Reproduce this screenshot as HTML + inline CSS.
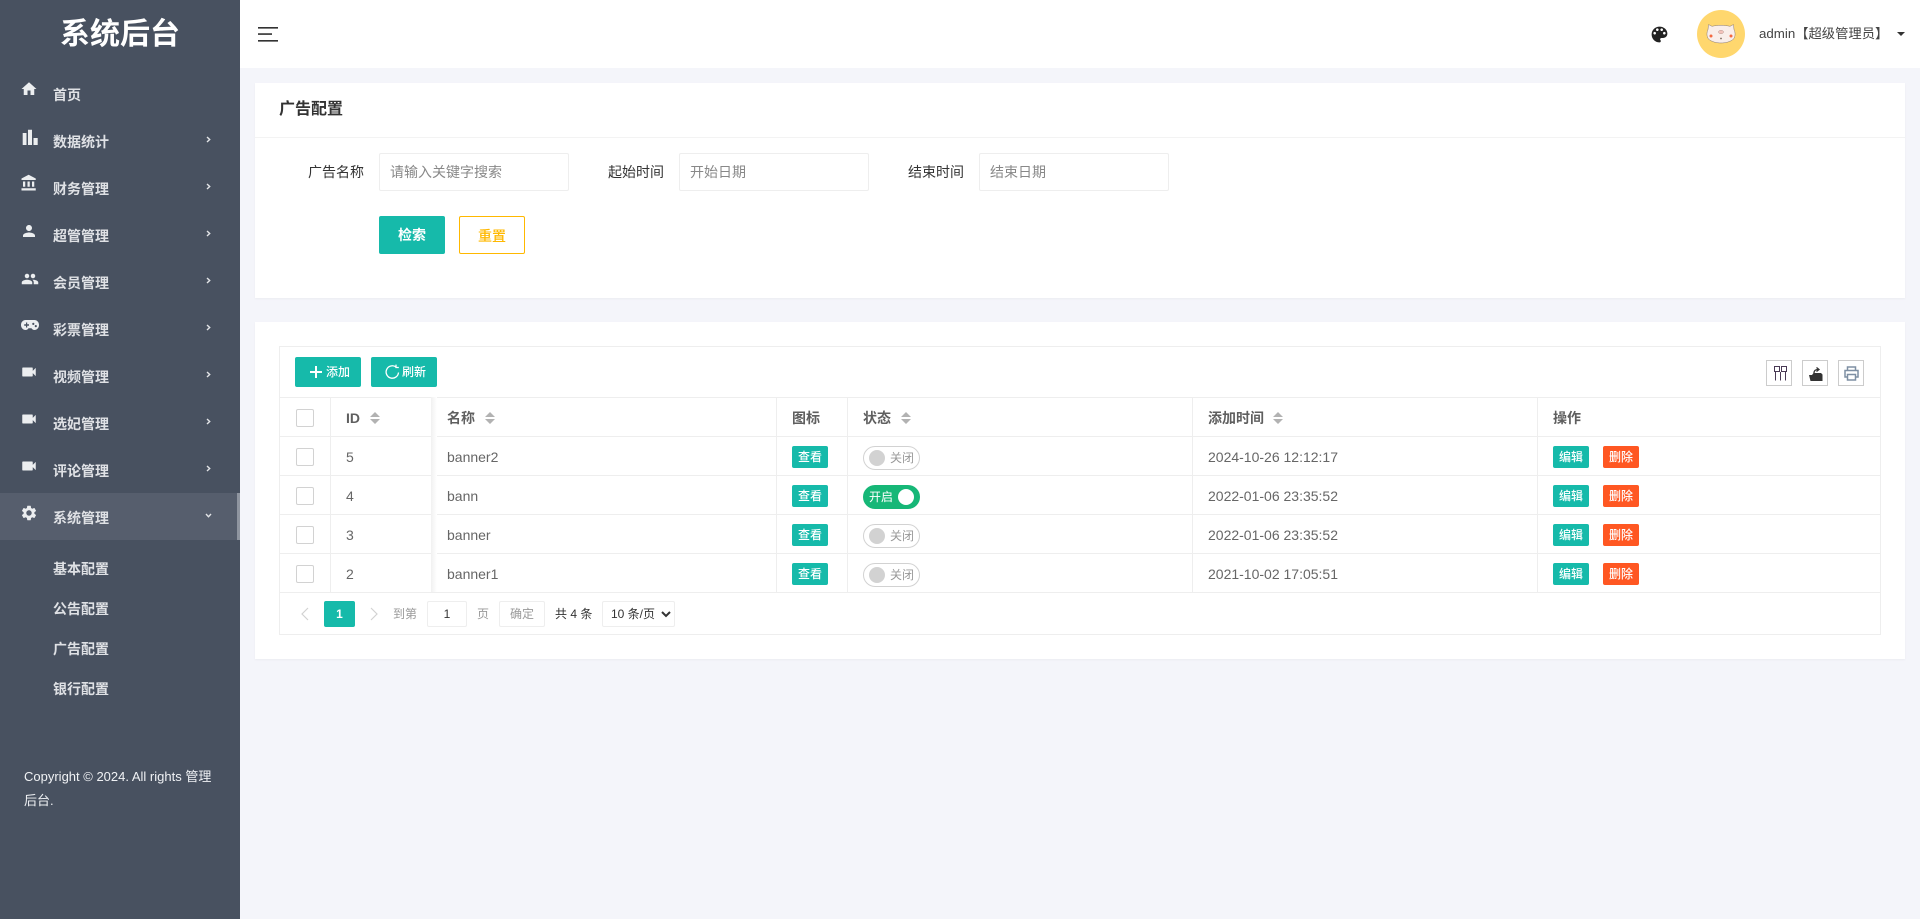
<!DOCTYPE html>
<html lang="zh-CN">
<head>
<meta charset="utf-8">
<title>广告配置</title>
<style>
*{box-sizing:border-box;margin:0;padding:0}
html,body{width:1920px;height:919px;overflow:hidden;background:#f4f5fa;font-family:"Liberation Sans","Noto Sans CJK SC",sans-serif;font-size:14px;color:#333}
.a{position:absolute}
.t{position:absolute;white-space:nowrap;height:20px;line-height:20px}
#side{position:absolute;left:0;top:0;width:240px;height:919px;background:#485160}
.m{font-weight:700;color:#dfe1e5;left:53px}
.ic{position:absolute;left:20px;width:18px;height:18px;fill:#eceef0}
.chev{position:absolute;left:206px;width:5px;height:7px;fill:none;stroke:#e2e4e7;stroke-width:1.4}
#head{position:absolute;left:240px;top:0;width:1680px;height:68px;background:#fff}
.card{position:absolute;left:255px;width:1650px;background:#fff;box-shadow:0 1px 2px rgba(0,0,0,.04)}
.ipt{position:absolute;top:153px;width:190px;height:38px;border:1px solid #eee;border-radius:2px;background:#fff;color:#888;line-height:36px;padding-left:11px}
.ipt.s{padding-left:10px}
.btn{position:absolute;border-radius:2px;text-align:center;font-weight:700}
.tb{position:absolute;left:279px;top:346px;width:1602px;height:289px;border:1px solid #eee;background:#fff}
.h{position:absolute;left:279px;width:1602px;height:1px;background:#eee}
.v{position:absolute;top:397px;width:1px;height:195px;background:#eee}
.th{font-weight:bold;color:#5f5f5f}
.td{color:#666}
.cb{position:absolute;left:296px;width:18px;height:18px;border:1px solid #d2d2d2;border-radius:2px;background:#fff}
.tag{position:absolute;width:36px;height:22px;line-height:22px;border-radius:2px;color:#fff;font-size:12px;font-weight:500;text-align:center;background:#16baaa}
.red{background:#ff5722}
.sw{position:absolute;left:863px;width:57px;height:24px;border-radius:12px;border:1px solid #d2d2d2;background:#fff;font-size:12px;color:#999;line-height:22px}
.sw i{position:absolute;left:5px;top:3px;width:16px;height:16px;border-radius:50%;background:#d2d2d2}
.sw span{position:absolute;left:26px;top:0}
.on{background:#16b777;border-color:#16b777;color:#fff}
.on i{left:34px;background:#fff}
.on span{left:5px}
.sort{position:absolute;width:10px;height:12px}
.tool{position:absolute;top:360px;width:26px;height:26px;border:1px solid #ccc;background:#fff}
</style>
</head>
<body>
<div id="side">
  <div class="t" style="left:0;width:240px;top:15px;height:40px;line-height:40px;text-align:center;font-size:30px;font-weight:700;color:#fff">系统后台</div>

  <svg class="ic" style="top:80px" viewBox="0 0 24 24"><path d="M10 20v-6h4v6h5v-8h3L12 3 2 12h3v8z"/></svg>
  <div class="t m" style="top:85px">首页</div>

  <svg class="ic" style="top:127px" viewBox="0 0 18 18"><path d="M2.700 6H6.500V18H2.700zM8 2.700H12V18H8zM13.500 11H17.700V18H13.500z"/></svg>
  <div class="t m" style="top:132px">数据统计</div>
  <svg class="chev" style="top:136px" viewBox="0 0 5 7"><path d="M1 1 3.700 3.500 1 6"/></svg>

  <svg class="ic" style="top:174px" viewBox="0 0 24 24"><path d="M4 10v7h3v-7H4zm6 0v7h3v-7h-3zM2 22h19v-3H2v3zm14-12v7h3v-7h-3zm-4.500-9L2 6v2h19V6l-9.500-5z"/></svg>
  <div class="t m" style="top:179px">财务管理</div>
  <svg class="chev" style="top:183px" viewBox="0 0 5 7"><path d="M1 1 3.700 3.500 1 6"/></svg>

  <svg class="ic" style="top:222px" viewBox="0 0 24 24"><path d="M12 12c2.210 0 4-1.790 4-4s-1.790-4-4-4-4 1.790-4 4 1.790 4 4 4zm0 2c-2.670 0-8 1.340-8 4v2h16v-2c0-2.660-5.330-4-8-4z"/></svg>
  <div class="t m" style="top:226px">超管管理</div>
  <svg class="chev" style="top:230px" viewBox="0 0 5 7"><path d="M1 1 3.700 3.500 1 6"/></svg>

  <svg class="ic" style="top:270px;left:21px" viewBox="0 0 24 24"><path d="M16 11c1.660 0 2.990-1.340 2.990-3S17.660 5 16 5c-1.660 0-3 1.340-3 3s1.340 3 3 3zm-8 0c1.660 0 2.990-1.340 2.990-3S9.660 5 8 5C6.340 5 5 6.340 5 8s1.340 3 3 3zm0 2c-2.330 0-7 1.170-7 3.500V19h14v-2.500c0-2.330-4.670-3.500-7-3.500zm8 0c-.290 0-.620.020-.970.050 1.160.840 1.970 1.970 1.970 3.450V19h6v-2.500c0-2.330-4.670-3.500-7-3.500z"/></svg>
  <div class="t m" style="top:273px">会员管理</div>
  <svg class="chev" style="top:277px" viewBox="0 0 5 7"><path d="M1 1 3.700 3.500 1 6"/></svg>

  <svg class="ic" style="top:316px;left:21px" viewBox="0 0 18 18"><path fill-rule="evenodd" d="M4.500 4H13.500C16 4 18 6.200 18 9S16 14 13.500 14C12 14 11 13 10.500 12.200H7.500C7 13 6 14 4.500 14 2 14 0 11.800 0 9S2 4 4.500 4ZM5 6.500V8.300H3.200V9.700H5V11.500H6.200V9.700H8V8.300H6.200V6.500ZM12.300 6.800A1.100 1.100 0 1 0 12.301 9A1.100 1.100 0 0 0 12.300 6.800ZM14.800 9A1.100 1.100 0 1 0 14.801 11.200A1.100 1.100 0 0 0 14.800 9Z"/></svg>
  <div class="t m" style="top:320px">彩票管理</div>
  <svg class="chev" style="top:324px" viewBox="0 0 5 7"><path d="M1 1 3.700 3.500 1 6"/></svg>

  <svg class="ic" style="top:363px" viewBox="0 0 24 24"><path d="M17 10.500V7c0-.550-.450-1-1-1H4c-.550 0-1 .450-1 1v10c0 .550.450 1 1 1h12c.550 0 1-.450 1-1v-3.500l4 4v-11l-4 4z"/></svg>
  <div class="t m" style="top:367px">视频管理</div>
  <svg class="chev" style="top:371px" viewBox="0 0 5 7"><path d="M1 1 3.700 3.500 1 6"/></svg>

  <svg class="ic" style="top:410px" viewBox="0 0 24 24"><path d="M17 10.500V7c0-.550-.450-1-1-1H4c-.550 0-1 .450-1 1v10c0 .550.450 1 1 1h12c.550 0 1-.450 1-1v-3.500l4 4v-11l-4 4z"/></svg>
  <div class="t m" style="top:414px">选妃管理</div>
  <svg class="chev" style="top:418px" viewBox="0 0 5 7"><path d="M1 1 3.700 3.500 1 6"/></svg>

  <svg class="ic" style="top:457px" viewBox="0 0 24 24"><path d="M17 10.500V7c0-.550-.450-1-1-1H4c-.550 0-1 .450-1 1v10c0 .550.450 1 1 1h12c.550 0 1-.450 1-1v-3.500l4 4v-11l-4 4z"/></svg>
  <div class="t m" style="top:461px">评论管理</div>
  <svg class="chev" style="top:465px" viewBox="0 0 5 7"><path d="M1 1 3.700 3.500 1 6"/></svg>

  <div class="a" style="left:0;top:493px;width:240px;height:47px;background:#565e6d"></div>
  <div class="a" style="left:237px;top:493px;width:3px;height:47px;background:#8f95a0"></div>
  <svg class="ic" style="top:504px" viewBox="0 0 24 24"><path d="M19.140 12.940c.040-.300.060-.610.060-.940 0-.320-.020-.640-.070-.940l2.030-1.580c.180-.140.230-.410.120-.610l-1.920-3.320c-.120-.220-.370-.290-.590-.220l-2.390.960c-.500-.380-1.030-.700-1.620-.940l-.360-2.540c-.040-.240-.240-.410-.480-.410h-3.840c-.240 0-.430.170-.470.410l-.360 2.540c-.590.240-1.130.570-1.620.940l-2.390-.960c-.220-.080-.470 0-.590.220L2.740 8.870c-.120.210-.080.470.120.610l2.030 1.580c-.050.300-.090.630-.090.940s.020.640.070.940l-2.030 1.580c-.180.140-.230.410-.120.610l1.920 3.320c.120.220.370.290.590.220l2.390-.960c.500.380 1.030.700 1.620.940l.360 2.540c.050.240.240.410.480.410h3.840c.240 0 .440-.170.470-.410l.360-2.540c.590-.240 1.130-.560 1.620-.940l2.390.960c.220.080.470 0 .590-.220l1.920-3.320c.120-.220.070-.470-.120-.610l-2.010-1.580zM12 15.600c-1.980 0-3.600-1.620-3.600-3.600s1.620-3.600 3.600-3.600 3.600 1.620 3.600 3.600-1.620 3.600-3.600 3.600z"/></svg>
  <div class="t m" style="top:508px">系统管理</div>
  <svg class="chev" style="top:513px;left:205px;width:7px;height:5px" viewBox="0 0 7 5"><path d="M1 1 3.500 3.700 6 1"/></svg>

  <div class="t m" style="top:559px">基本配置</div>
  <div class="t m" style="top:599px">公告配置</div>
  <div class="t m" style="top:639px">广告配置</div>
  <div class="t m" style="top:679px">银行配置</div>

  <div class="a" style="left:24px;top:765px;width:200px;font-size:13px;line-height:24px;color:#f0f2f5">Copyright © 2024. All rights 管理<br>后台.</div>
</div>

<div id="head"></div>
<svg class="a" style="left:258px;top:26px;width:21px;height:17px" viewBox="0 0 21 17"><path d="M0 1h20v1.600H0zM0 7.300h14v1.600H0zM0 14h20v1.600H0z" fill="#333"/></svg>
<svg class="a" style="left:1649px;top:24px;width:21px;height:21px" viewBox="0 0 24 24"><path fill="#222" d="M12 3a9 9 0 0 0 0 18c.830 0 1.500-.670 1.500-1.500 0-.390-.150-.740-.390-1.010-.230-.260-.380-.610-.380-.990 0-.830.670-1.500 1.500-1.500H16c2.760 0 5-2.240 5-5 0-4.420-4.030-8-9-8zm-5.500 9c-.830 0-1.500-.670-1.500-1.500S5.670 9 6.500 9 8 9.670 8 10.500 7.330 12 6.500 12zm3-4C8.670 8 8 7.330 8 6.500S8.670 5 9.500 5s1.500.670 1.500 1.500S10.330 8 9.500 8zm5 0c-.830 0-1.500-.670-1.500-1.500S13.670 5 14.500 5s1.500.670 1.500 1.500S15.330 8 14.500 8zm3 4c-.830 0-1.500-.670-1.500-1.500S16.670 9 17.500 9s1.500.670 1.500 1.500-.670 1.500-1.500 1.500z"/></svg>
<svg class="a" style="left:1697px;top:10px;width:48px;height:48px" viewBox="0 0 48 48">
  <circle cx="24" cy="24" r="24" fill="#ffd76e"/>
  <path d="M11.500 14.500l3.500 1.800c5.500-1.300 12.500-1.300 18 0l3.500-1.800.5 5c1.500 3 1.500 7-.5 9.500-3 2.800-7.800 4-12.500 4s-9.500-1.200-12.500-4c-2-2.500-2-6.500-.5-9.500z" fill="#f9eeea" stroke="#8a7a70" stroke-width=".5"/>
  <circle cx="14" cy="26" r="1.500" fill="#f4693f"/><circle cx="34" cy="26" r="1.500" fill="#f4693f"/>
  <ellipse cx="24" cy="22" rx="2.600" ry="1.700" fill="#f3c2bb" stroke="#a88a80" stroke-width=".4"/>
  <circle cx="24" cy="28.500" r=".9" fill="#7a6a60"/>
</svg>
<div class="t" style="left:1759px;top:24px;font-size:13.3px;color:#444">admin【超级管理员】</div>
<div class="a" style="left:1897px;top:32px;width:0;height:0;border-left:4px solid transparent;border-right:4px solid transparent;border-top:4px solid #333"></div>

<div class="card" style="top:83px;height:215px"></div>
<div class="a" style="left:255px;top:137px;width:1650px;height:1px;background:#f3f3f3"></div>
<div class="t" style="left:279px;top:100px;font-size:16px;font-weight:700;color:#333">广告配置</div>
<div class="t" style="left:308px;top:162px;color:#333">广告名称</div>
<div class="ipt s" style="left:379px">请输入关键字搜索</div>
<div class="t" style="left:608px;top:162px;color:#333">起始时间</div>
<div class="ipt s" style="left:679px">开始日期</div>
<div class="t" style="left:908px;top:162px;color:#333">结束时间</div>
<div class="ipt s" style="left:979px">结束日期</div>
<div class="btn" style="left:379px;top:216px;width:66px;height:38px;line-height:39px;background:#16baaa;color:#fff">检索</div>
<div class="btn" style="left:459px;top:216px;width:66px;height:38px;line-height:38px;border:1px solid #ffb800;color:#ffb800;background:#fff;font-weight:500">重置</div>

<div class="card" style="top:322px;height:337px"></div>
<div class="tb"></div>
<div class="btn" style="left:295px;top:357px;width:66px;height:30px;background:#16baaa"></div>
<svg class="a" style="left:310px;top:366px;width:12px;height:12px" viewBox="0 0 12 12"><path d="M6 0v12M0 6h12" stroke="#fff" stroke-width="2"/></svg>
<div class="t" style="left:326px;top:362px;font-size:12px;font-weight:500;color:#fff">添加</div>
<div class="btn" style="left:371px;top:357px;width:66px;height:30px;background:#16baaa"></div>
<svg class="a" style="left:384px;top:364px;width:16px;height:16px" viewBox="0 0 16 16"><path d="M14.500 8.500A6.200 6.200 0 1 1 12 3M12 .6V3.500H14.800" fill="none" stroke="#fff" stroke-width="1.300"/></svg>
<div class="t" style="left:402px;top:362px;font-size:12px;font-weight:500;color:#fff">刷新</div>

<div class="tool" style="left:1766px"><svg class="a" style="left:7px;top:5px;width:13px;height:15px" viewBox="0 0 13 15"><path d="M.500.500h5v5h-5zM7.500.500h5v5h-5zM1.500 6v8.500M6.500 6v8.500M11.500 6v8.500" fill="none" stroke="#4a3a55" stroke-width="1"/></svg></div>
<div class="tool" style="left:1802px"><svg class="a" style="left:6px;top:5px;width:14px;height:15px" viewBox="0 0 14 15"><path d="M0 9l3 0 1.500-2H12l1.500 1.500V15H1.500z" fill="#333"/><path d="M5 7c0-2.500 2-3.500 4-3.500M7.500 1.500 10 3.500 7.500 5.500" fill="none" stroke="#333" stroke-width="1.300"/></svg></div>
<div class="tool" style="left:1838px"><svg class="a" style="left:5px;top:5px;width:15px;height:15px" viewBox="0 0 15 15"><path d="M3.500 4.500V1h8v3.500M3.500 11H1V4.500h13V11H11.500M3.500 8.500h8V14H3.500z" fill="none" stroke="#7e8fa3" stroke-width="1.500"/></svg></div>

<div class="h" style="top:397px"></div>
<div class="h" style="top:436px"></div>
<div class="h" style="top:475px"></div>
<div class="h" style="top:514px"></div>
<div class="h" style="top:553px"></div>
<div class="h" style="top:592px"></div>
<div class="v" style="left:330px"></div>
<div class="a" style="left:431px;top:397px;width:6px;height:195px;background:linear-gradient(90deg,#f1f1f1,#fff)"></div>
<div class="v" style="left:776px"></div>
<div class="v" style="left:847px"></div>
<div class="v" style="left:1192px"></div>
<div class="v" style="left:1537px"></div>

<div class="cb" style="top:409px"></div>
<div class="t th" style="left:346px;top:408px">ID</div>
<svg class="sort" style="left:370px;top:412px" viewBox="0 0 10 12"><path d="M5 0l5 5H0zM0 7h10l-5 5z" fill="#b2b2b2"/></svg>
<div class="t th" style="left:447px;top:408px">名称</div>
<svg class="sort" style="left:485px;top:412px" viewBox="0 0 10 12"><path d="M5 0l5 5H0zM0 7h10l-5 5z" fill="#b2b2b2"/></svg>
<div class="t th" style="left:792px;top:408px">图标</div>
<div class="t th" style="left:863px;top:408px">状态</div>
<svg class="sort" style="left:901px;top:412px" viewBox="0 0 10 12"><path d="M5 0l5 5H0zM0 7h10l-5 5z" fill="#b2b2b2"/></svg>
<div class="t th" style="left:1208px;top:408px">添加时间</div>
<svg class="sort" style="left:1273px;top:412px" viewBox="0 0 10 12"><path d="M5 0l5 5H0zM0 7h10l-5 5z" fill="#b2b2b2"/></svg>
<div class="t th" style="left:1553px;top:408px">操作</div>

<div class="cb" style="top:448px"></div>
<div class="t td" style="left:346px;top:447px">5</div>
<div class="t td" style="left:447px;top:447px">banner2</div>
<div class="tag" style="left:792px;top:446px">查看</div>
<div class="sw" style="top:446px"><i></i><span>关闭</span></div>
<div class="t td" style="left:1208px;top:447px">2024-10-26 12:12:17</div>
<div class="tag" style="left:1553px;top:446px">编辑</div>
<div class="tag red" style="left:1603px;top:446px">删除</div>

<div class="cb" style="top:487px"></div>
<div class="t td" style="left:346px;top:486px">4</div>
<div class="t td" style="left:447px;top:486px">bann</div>
<div class="tag" style="left:792px;top:485px">查看</div>
<div class="sw on" style="top:485px"><i></i><span>开启</span></div>
<div class="t td" style="left:1208px;top:486px">2022-01-06 23:35:52</div>
<div class="tag" style="left:1553px;top:485px">编辑</div>
<div class="tag red" style="left:1603px;top:485px">删除</div>

<div class="cb" style="top:526px"></div>
<div class="t td" style="left:346px;top:525px">3</div>
<div class="t td" style="left:447px;top:525px">banner</div>
<div class="tag" style="left:792px;top:524px">查看</div>
<div class="sw" style="top:524px"><i></i><span>关闭</span></div>
<div class="t td" style="left:1208px;top:525px">2022-01-06 23:35:52</div>
<div class="tag" style="left:1553px;top:524px">编辑</div>
<div class="tag red" style="left:1603px;top:524px">删除</div>

<div class="cb" style="top:565px"></div>
<div class="t td" style="left:346px;top:564px">2</div>
<div class="t td" style="left:447px;top:564px">banner1</div>
<div class="tag" style="left:792px;top:563px">查看</div>
<div class="sw" style="top:563px"><i></i><span>关闭</span></div>
<div class="t td" style="left:1208px;top:564px">2021-10-02 17:05:51</div>
<div class="tag" style="left:1553px;top:563px">编辑</div>
<div class="tag red" style="left:1603px;top:563px">删除</div>

<svg class="a" style="left:301px;top:607px;width:8px;height:14px" viewBox="0 0 8 14"><path d="M7 1 1 7l6 6" fill="none" stroke="#d2d2d2" stroke-width="1.200"/></svg>
<div class="a" style="left:324px;top:601px;width:31px;height:26px;line-height:26px;background:#16baaa;border-radius:2px;color:#fff;font-size:12px;font-weight:bold;text-align:center">1</div>
<svg class="a" style="left:370px;top:607px;width:8px;height:14px" viewBox="0 0 8 14"><path d="M1 1l6 6-6 6" fill="none" stroke="#d2d2d2" stroke-width="1.200"/></svg>
<div class="t" style="left:393px;top:604px;font-size:12px;color:#999">到第</div>
<div class="a" style="left:427px;top:601px;width:40px;height:26px;line-height:24px;border:1px solid #eee;border-radius:2px;font-size:12px;text-align:center;color:#333">1</div>
<div class="t" style="left:477px;top:604px;font-size:12px;color:#999">页</div>
<div class="a" style="left:499px;top:601px;width:46px;height:26px;line-height:25px;border:1px solid #eee;border-radius:2px;font-size:12px;text-align:center;color:#999">确定</div>
<div class="t" style="left:555px;top:604px;font-size:12px;color:#333">共 4 条</div>
<div class="a" style="left:602px;top:601px;width:73px;height:26px;line-height:24px;border:1px solid #eee;border-radius:2px;font-size:12px;color:#333;padding-left:8px">10 条/页</div>
<svg class="a" style="left:661px;top:611px;width:10px;height:7px" viewBox="0 0 10 7"><path d="M1 1l4 4 4-4" fill="none" stroke="#333" stroke-width="2"/></svg>
</body>
</html>
